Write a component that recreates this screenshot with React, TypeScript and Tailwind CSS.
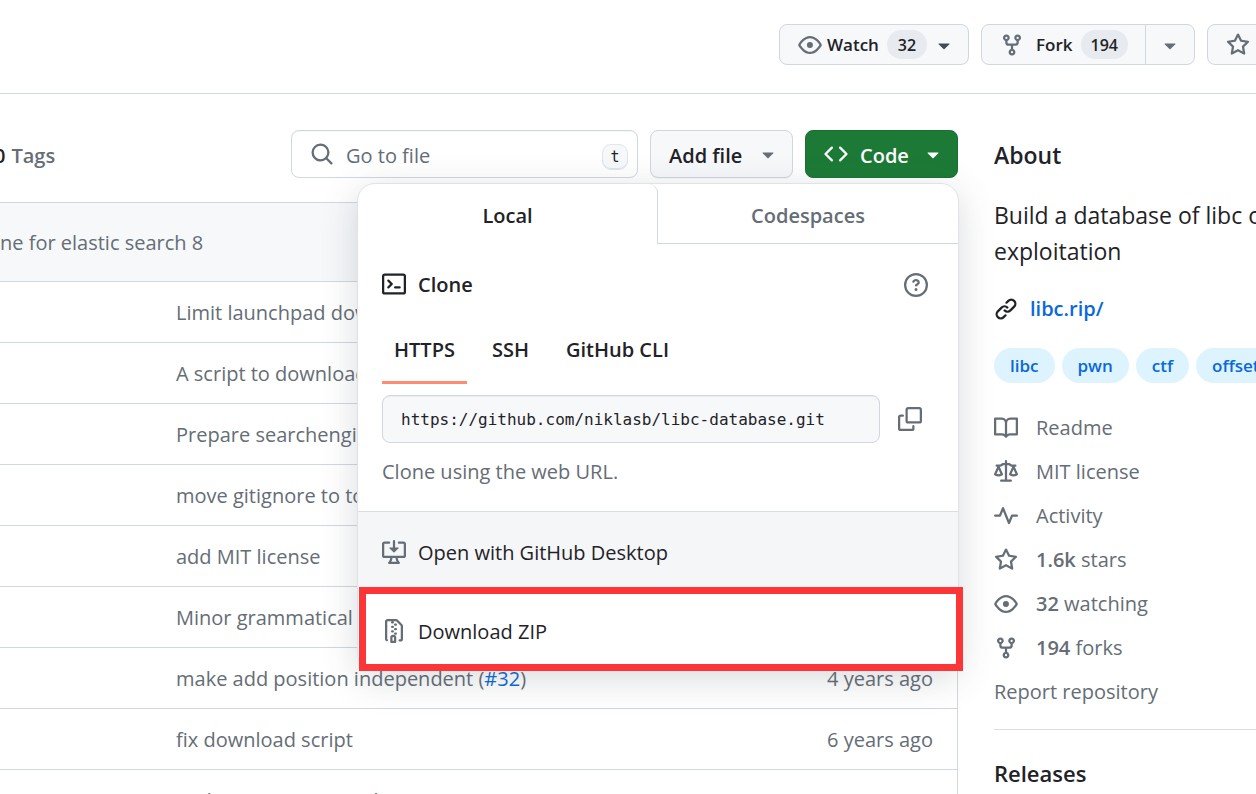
import type { ReactNode } from "react";

const icons = {
  eye: "M8 2c1.981 0 3.671.992 4.933 2.078 1.27 1.091 2.187 2.345 2.637 3.023a1.62 1.62 0 0 1 0 1.798c-.45.678-1.367 1.932-2.637 3.023C11.67 13.008 9.981 14 8 14c-1.981 0-3.671-.992-4.933-2.078C1.797 10.83.88 9.576.43 8.898a1.62 1.62 0 0 1 0-1.798c.45-.677 1.367-1.931 2.637-3.022C4.33 2.992 6.019 2 8 2ZM1.679 7.932a.12.12 0 0 0 0 .136c.411.622 1.241 1.75 2.366 2.717C5.176 11.758 6.527 12.5 8 12.5c1.473 0 2.825-.742 3.955-1.715 1.124-.967 1.954-2.096 2.366-2.717a.12.12 0 0 0 0-.136c-.412-.621-1.242-1.75-2.366-2.717C10.824 4.242 9.473 3.5 8 3.5c-1.473 0-2.825.742-3.955 1.715-1.124.967-1.954 2.096-2.366 2.717ZM8 10a2 2 0 1 1-.001-3.999A2 2 0 0 1 8 10Z",
  fork: "M5 5.372v.878c0 .414.336.75.75.75h4.5a.75.75 0 0 0 .75-.75v-.878a2.25 2.25 0 1 1 1.5 0v.878a2.25 2.25 0 0 1-2.25 2.25h-1.5v2.128a2.251 2.251 0 1 1-1.5 0V8.5h-1.5A2.25 2.25 0 0 1 3.5 6.25v-.878a2.25 2.25 0 1 1 1.5 0ZM5 3.25a.75.75 0 1 0-1.5 0 .75.75 0 0 0 1.5 0Zm6.75.75a.75.75 0 1 0 0-1.5.75.75 0 0 0 0 1.5Zm-3 8.75a.75.75 0 1 0-1.5 0 .75.75 0 0 0 1.5 0Z",
  caret: "m4.427 7.427 3.396 3.396a.25.25 0 0 0 .354 0l3.396-3.396A.25.25 0 0 0 11.396 7H4.604a.25.25 0 0 0-.177.427Z",
  star: "M8 .25a.75.75 0 0 1 .673.418l1.882 3.815 4.21.612a.75.75 0 0 1 .416 1.279l-3.046 2.97.719 4.192a.751.751 0 0 1-1.088.791L8 12.347l-3.766 1.98a.75.75 0 0 1-1.088-.79l.72-4.194L.818 6.374a.75.75 0 0 1 .416-1.28l4.21-.611L7.327.668A.75.75 0 0 1 8 .25Zm0 2.445L6.615 5.5a.75.75 0 0 1-.564.41l-3.097.45 2.24 2.184a.75.75 0 0 1 .216.664l-.528 3.084 2.769-1.456a.75.75 0 0 1 .698 0l2.77 1.456-.53-3.084a.75.75 0 0 1 .216-.664l2.24-2.183-3.096-.45a.75.75 0 0 1-.564-.41L8 2.694Z",
  search: "M10.68 11.74a6 6 0 0 1-7.922-8.982 6 6 0 0 1 8.982 7.922l3.04 3.04a.749.749 0 0 1-.326 1.275.749.749 0 0 1-.734-.215ZM11.5 7a4.499 4.499 0 1 0-8.997 0A4.499 4.499 0 0 0 11.5 7Z",
  code: "m11.28 3.22 4.25 4.25a.75.75 0 0 1 0 1.06l-4.25 4.25a.749.749 0 0 1-1.275-.326.749.749 0 0 1 .215-.734L13.94 8l-3.72-3.72a.749.749 0 0 1 .326-1.275.749.749 0 0 1 .734.215Zm-6.56 0a.751.751 0 0 1 1.042.018.751.751 0 0 1 .018 1.042L2.06 8l3.72 3.72a.749.749 0 0 1-.326 1.275.749.749 0 0 1-.734-.215L.47 8.53a.75.75 0 0 1 0-1.06Z",
  terminal: "M0 2.75C0 1.784.784 1 1.75 1h12.5c.966 0 1.75.784 1.75 1.75v10.5A1.75 1.75 0 0 1 14.25 15H1.75A1.75 1.75 0 0 1 0 13.25Zm1.75-.25a.25.25 0 0 0-.25.25v10.5c0 .138.112.25.25.25h12.5a.25.25 0 0 0 .25-.25V2.75a.25.25 0 0 0-.25-.25ZM7.25 8a.749.749 0 0 1-.22.53l-2.25 2.25a.749.749 0 0 1-1.275-.326.749.749 0 0 1 .215-.734L5.44 8 3.72 6.28a.749.749 0 0 1 .326-1.275.749.749 0 0 1 .734.215l2.25 2.25c.141.14.22.331.22.53Zm1.5 1.5h3a.75.75 0 0 1 0 1.5h-3a.75.75 0 0 1 0-1.5Z",
  question: "M0 8a8 8 0 1 1 16 0A8 8 0 0 1 0 8Zm8-6.5a6.5 6.5 0 1 0 0 13 6.5 6.5 0 0 0 0-13ZM6.92 6.085h.001a.749.749 0 1 1-1.342-.67c.169-.339.436-.701.849-.977C6.845 4.16 7.369 4 8 4a2.756 2.756 0 0 1 1.637.525c.503.377.863.965.863 1.725 0 .448-.115.83-.329 1.15-.205.307-.47.513-.692.662-.109.072-.22.138-.313.195l-.006.004a6.24 6.24 0 0 0-.26.16.952.952 0 0 0-.276.245.75.75 0 0 1-1.248-.832c.184-.264.42-.489.692-.661.103-.067.207-.132.313-.195l.007-.004c.1-.061.182-.11.258-.161a.969.969 0 0 0 .277-.245C8.96 6.514 9 6.427 9 6.25a.612.612 0 0 0-.262-.525A1.27 1.27 0 0 0 8 5.5c-.369 0-.595.09-.74.187a1.01 1.01 0 0 0-.34.398ZM9 11a1 1 0 1 1-2 0 1 1 0 0 1 2 0Z",
  copy: "M0 6.75C0 5.784.784 5 1.75 5h1.5a.75.75 0 0 1 0 1.5h-1.5a.25.25 0 0 0-.25.25v7.5c0 .138.112.25.25.25h7.5a.25.25 0 0 0 .25-.25v-1.5a.75.75 0 0 1 1.5 0v1.5A1.75 1.75 0 0 1 9.25 16h-7.5A1.75 1.75 0 0 1 0 14.25ZM5 1.75C5 .784 5.784 0 6.75 0h7.5C15.216 0 16 .784 16 1.75v7.5A1.75 1.75 0 0 1 14.25 11h-7.5A1.75 1.75 0 0 1 5 9.25Zm1.75-.25a.25.25 0 0 0-.25.25v7.5c0 .138.112.25.25.25h7.5a.25.25 0 0 0 .25-.25v-7.5a.25.25 0 0 0-.25-.25Z",
  desktop: "m4.927 5.427 2.896 2.896a.25.25 0 0 0 .354 0l2.896-2.896A.25.25 0 0 0 10.896 5H8.75V.75a.75.75 0 1 0-1.5 0V5H5.104a.25.25 0 0 0-.177.427ZM1.573 2.573a.25.25 0 0 0-.073.177v7.5a.25.25 0 0 0 .25.25h12.5a.25.25 0 0 0 .25-.25v-7.5a.25.25 0 0 0-.25-.25h-3a.75.75 0 1 1 0-1.5h3A1.75 1.75 0 0 1 16 2.75v7.5A1.75 1.75 0 0 1 14.25 12h-3.727c.099 1.041.52 1.872 1.292 2.757A.75.75 0 0 1 11.25 16h-6.5a.75.75 0 0 1-.565-1.243c.772-.885 1.192-1.716 1.292-2.757H1.75A1.75 1.75 0 0 1 0 10.25v-7.5A1.75 1.75 0 0 1 1.75 1h3a.75.75 0 0 1 0 1.5h-3a.25.25 0 0 0-.177.073ZM6.982 12a5.72 5.72 0 0 1-.765 2.5h3.566a5.72 5.72 0 0 1-.765-2.5H6.982Z",
  zip: "M3.5 1.75v11.5c0 .09.048.173.126.217a.75.75 0 0 1-.752 1.298A1.748 1.748 0 0 1 2 13.25V1.75C2 .784 2.784 0 3.75 0h5.586c.464 0 .909.185 1.237.513l2.914 2.914c.329.328.513.773.513 1.237v8.586A1.75 1.75 0 0 1 12.25 15h-.5a.75.75 0 0 1 0-1.5h.5a.25.25 0 0 0 .25-.25V4.664a.25.25 0 0 0-.073-.177L9.513 1.573a.25.25 0 0 0-.177-.073H7.25a.75.75 0 0 1 0 1.5h-.5a.75.75 0 0 1 0-1.5h-3a.25.25 0 0 0-.25.25Zm3.75 8.75h.5c.966 0 1.75.784 1.75 1.75v3a.75.75 0 0 1-.75.75h-2.5a.75.75 0 0 1-.75-.75v-3c0-.966.784-1.75 1.75-1.75ZM6 5.25a.75.75 0 0 1 .75-.75h.5a.75.75 0 0 1 0 1.5h-.5A.75.75 0 0 1 6 5.25Zm.75 2.25h.5a.75.75 0 0 1 0 1.5h-.5a.75.75 0 0 1 0-1.5ZM8 6.75A.75.75 0 0 1 8.75 6h.5a.75.75 0 0 1 0 1.5h-.5A.75.75 0 0 1 8 6.75ZM8.75 3h.5a.75.75 0 0 1 0 1.5h-.5a.75.75 0 0 1 0-1.5ZM8 9.75A.75.75 0 0 1 8.75 9h.5a.75.75 0 0 1 0 1.5h-.5A.75.75 0 0 1 8 9.75Zm-1 2.5v2.25h1v-2.25a.25.25 0 0 0-.25-.25h-.5a.25.25 0 0 0-.25.25Z",
  link: "m7.775 3.275 1.25-1.25a3.5 3.5 0 1 1 4.95 4.95l-2.5 2.5a3.5 3.5 0 0 1-4.95 0 .751.751 0 0 1 .018-1.042.751.751 0 0 1 1.042-.018 1.998 1.998 0 0 0 2.83 0l2.5-2.5a2.002 2.002 0 0 0-2.83-2.83l-1.25 1.25a.751.751 0 0 1-1.042-.018.751.751 0 0 1-.018-1.042Zm-4.69 9.64a1.998 1.998 0 0 0 2.83 0l1.25-1.25a.751.751 0 0 1 1.042.018.751.751 0 0 1 .018 1.042l-1.25 1.25a3.5 3.5 0 1 1-4.95-4.95l2.5-2.5a3.5 3.5 0 0 1 4.95 0 .751.751 0 0 1-.018 1.042.751.751 0 0 1-1.042.018 1.998 1.998 0 0 0-2.83 0l-2.5 2.5a1.998 1.998 0 0 0 0 2.83Z",
  book: "M0 1.75A.75.75 0 0 1 .75 1h4.253c1.227 0 2.317.59 3 1.501A3.743 3.743 0 0 1 11.006 1h4.245a.75.75 0 0 1 .75.75v10.5a.75.75 0 0 1-.75.75h-4.507a2.25 2.25 0 0 0-1.591.659l-.622.621a.75.75 0 0 1-1.06 0l-.622-.621A2.25 2.25 0 0 0 5.258 13H.75a.75.75 0 0 1-.75-.75Zm7.251 10.324.004-5.073-.002-2.253A2.25 2.25 0 0 0 5.003 2.5H1.5v9h3.757a3.75 3.75 0 0 1 1.994.574ZM8.755 4.75l-.004 7.322a3.752 3.752 0 0 1 1.992-.572H14.5v-9h-3.495a2.25 2.25 0 0 0-2.25 2.25Z",
  law: "M8.75.75V2h.985c.304 0 .603.08.867.231l1.29.736c.038.022.08.033.124.033h2.234a.75.75 0 0 1 0 1.5h-.427l2.111 4.692a.75.75 0 0 1-.154.838l-.53-.53.529.531-.001.002-.002.002-.006.006-.006.005-.01.01-.045.04c-.21.176-.441.327-.686.45C14.556 10.78 13.88 11 13 11a4.498 4.498 0 0 1-2.023-.454 3.544 3.544 0 0 1-.686-.45l-.045-.04-.016-.015-.006-.006-.004-.004v-.001a.75.75 0 0 1-.154-.838L12.178 4.5h-.162c-.305 0-.604-.079-.868-.231l-1.29-.736a.245.245 0 0 0-.124-.033H8.75V13h2.5a.75.75 0 0 1 0 1.5h-6.5a.75.75 0 0 1 0-1.5h2.5V3.5h-.984a.245.245 0 0 0-.124.033l-1.289.737c-.265.15-.564.23-.869.23h-.162l2.112 4.692a.75.75 0 0 1-.154.838l-.53-.53.529.531-.001.002-.002.002-.006.006-.016.015-.045.04c-.21.176-.441.327-.686.45C4.556 10.78 3.88 11 3 11a4.498 4.498 0 0 1-2.023-.454 3.544 3.544 0 0 1-.686-.45l-.045-.04-.016-.015-.006-.006-.004-.004v-.001a.75.75 0 0 1-.154-.838L2.178 4.5H1.75a.75.75 0 0 1 0-1.5h2.234a.249.249 0 0 0 .125-.033l1.288-.737c.265-.15.564-.23.869-.23h.984V.75a.75.75 0 0 1 1.5 0Zm2.945 8.477c.285.135.718.273 1.305.273s1.02-.138 1.305-.273L13 6.327Zm-10 0c.285.135.718.273 1.305.273s1.02-.138 1.305-.273L3 6.327Z",
  pulse: "M6 2c.306 0 .582.187.696.471L10 10.731l1.304-3.26A.751.751 0 0 1 12 7h3.25a.75.75 0 0 1 0 1.5h-2.742l-1.812 4.528a.751.751 0 0 1-1.392 0L6 4.77 4.696 8.03A.75.75 0 0 1 4 8.5H.75a.75.75 0 0 1 0-1.5h2.742l1.812-4.529A.751.751 0 0 1 6 2Z",
};

type IconName = keyof typeof icons;

function Icon({ name, className = "" }: { name: IconName; className?: string }) {
  return (
    <svg viewBox="0 0 16 16" aria-hidden="true" className={`size-6 shrink-0 fill-current ${className}`}>
      <path d={icons[name]} />
    </svg>
  );
}

function Counter({ children }: { children: ReactNode }) {
  return (
    <span className="flex h-[29px] min-w-10 items-center justify-center rounded-full bg-[#e7eaef] px-2.5 text-[16px]">
      {children}
    </span>
  );
}

const smallButton = "flex h-[41px] items-center border border-[#d0d7de] bg-[#f6f8fa] text-[17px] font-semibold";

function RepoHeader() {
  return (
    <header className="flex h-[94px] items-start overflow-hidden border-b border-[#d0d7de] pt-6">
      <div className="flex-1" />
      <div className="flex w-[477px] shrink-0 gap-3">
        <button type="button" className={`${smallButton} w-[190px] shrink-0 rounded-lg pl-[18px]`}>
          <Icon name="eye" className="mr-[5px] text-[#656d76]" />
          <span className="mr-2 pt-px">Watch</span>
          <Counter>32</Counter>
          <Icon name="caret" className="ml-[5px] text-[#424a53]" />
        </button>
        <div className="flex w-[214px] shrink-0">
          <button type="button" className={`${smallButton} flex-1 rounded-l-lg pl-[18px]`}>
            <Icon name="fork" className="mr-3 text-[#656d76]" />
            <span className="mr-2 pt-px">Fork</span>
            <Counter>194</Counter>
          </button>
          <button
            type="button"
            aria-label="See your forks"
            className={`${smallButton} -ml-px w-[50px] justify-center rounded-r-lg text-[#656d76]`}
          >
            <Icon name="caret" />
          </button>
        </div>
        <button
          type="button"
          aria-label="Star this repository"
          className={`${smallButton} w-40 shrink-0 rounded-lg pl-[18px] text-[#656d76]`}
        >
          <Icon name="star" />
        </button>
      </div>
    </header>
  );
}

function ClonePopover() {
  return (
    <div
      role="dialog"
      aria-label="Get the code"
      className="absolute top-[53px] -right-px z-10 w-[602px] rounded-[18px] border border-[#dfe3e8] bg-white shadow-[0_8px_36px_rgba(66,74,83,0.2)]"
    >
      <div role="tablist" className="flex h-[60px]">
        <button
          type="button"
          role="tab"
          aria-selected="true"
          className="w-[300px] rounded-tr-[9px] border-r border-[#d0d7de] pt-1 font-semibold"
        >
          Local
        </button>
        <button
          type="button"
          role="tab"
          aria-selected="false"
          className="flex-1 border-b border-[#d0d7de] pt-1 font-semibold text-[#656d76]"
        >
          Codespaces
        </button>
      </div>

      <section className="px-6 pt-6 pb-6">
        <div className="flex h-8 items-center">
          <Icon name="terminal" className="mr-3" />
          <h2 className="pt-0.5 font-semibold">Clone</h2>
          <button
            type="button"
            aria-label="Which remote URL should I use?"
            className="mr-1.5 ml-auto pt-0.5 text-[#656d76]"
          >
            <Icon name="question" />
          </button>
        </div>
        <nav className="mt-4 flex h-[68px] gap-[13px] font-semibold">
          <button type="button" className="border-b-[3px] border-[#fd8c73] px-3 pt-0.5">HTTPS</button>
          <button type="button" className="border-b-[3px] border-transparent px-3 pt-0.5">SSH</button>
          <button type="button" className="border-b-[3px] border-transparent px-3 pt-0.5">GitHub CLI</button>
        </nav>
        <div className="mt-[11px] flex items-center">
          <input
            readOnly
            aria-label="Clone URL"
            value="https://github.com/niklasb/libc-database.git"
            className="h-12 min-w-0 flex-1 rounded-lg border border-[#d0d7de] bg-[#f6f8fa] px-[18px] font-['DejaVu_Sans_Mono',monospace] text-[16px] text-[#1f2328] shadow-[inset_0_1px_0_rgba(208,215,222,0.3)]"
          />
          <button type="button" aria-label="Copy URL" className="ml-1.5 p-3 text-[#656d76]">
            <Icon name="copy" />
          </button>
        </div>
        <p className="mt-3.5 leading-[30px] text-[#656d76]">Clone using the web URL.</p>
      </section>

      <ul>
        <li className="border-t border-[#d8dee4]">
          <a href="#desktop" className="flex h-20 items-center gap-3 bg-[#f5f6f8] px-6">
            <Icon name="desktop" className="text-[#656d76]" />
            <span className="pt-0.5">Open with GitHub Desktop</span>
          </a>
        </li>
        <li className="relative">
          <a href="#zip" className="flex h-[78px] items-center gap-3 px-6">
            <Icon name="zip" className="text-[#656d76]" />
            <span className="pt-0.5">Download ZIP</span>
          </a>
          <div className="pointer-events-none absolute -top-[5px] -right-[5px] -bottom-px left-px border-[7px] border-[#fc3636]" />
        </li>
      </ul>
    </div>
  );
}

function Toolbar() {
  return (
    <div className="flex h-12 items-center gap-3">
      <a href="#tags" className="-ml-1.5 flex gap-1.5 pt-[3px] font-semibold text-[#656d76]">
        <span className="text-[#1f2328]">0</span> Tags
      </a>
      <label className="ml-auto flex h-12 w-[347px] items-center rounded-lg border border-[#d0d7de] pr-[9px] pl-[18px] shadow-[inset_0_1px_0_rgba(208,215,222,0.2)]">
        <Icon name="search" className="mr-3 text-[#656d76]" />
        <input
          type="text"
          aria-label="Go to file"
          placeholder="Go to file"
          className="min-w-0 flex-1 pt-[3px] outline-none placeholder:text-[#656d76]"
        />
        <kbd className="mt-1.5 flex size-[26px] items-center justify-center rounded-[9px] border border-[#e2e6eb] bg-[#f6f8fa] font-['DejaVu_Sans_Mono',monospace] text-[15px] shadow-[inset_0_-1px_0_#dfe4ea]">
          t
        </kbd>
      </label>
      <button
        type="button"
        className="flex h-12 w-[143px] items-center justify-between rounded-lg border border-[#d0d7de] bg-[#f6f8fa] pr-3 pl-[18px] font-semibold shadow-[0_1px_0_rgba(31,35,40,0.04)]"
      >
        <span className="pt-[3px]">Add file</span>
        <Icon name="caret" className="text-[#656d76]" />
      </button>
      <div className="relative">
        <button
          type="button"
          className="flex h-12 w-[153px] items-center rounded-lg border border-[#1a7132] bg-[#1c7a36] px-[18px] font-semibold text-white"
        >
          <Icon name="code" className="mr-3" />
          <span className="pt-[3px]">Code</span>
          <Icon name="caret" className="-mr-1.5 ml-auto" />
        </button>
        <ClonePopover />
      </div>
    </div>
  );
}

type Commit = { message: string; issue?: string; age: string };

const commits: Commit[] = [
  { message: "Limit launchpad downloads", age: "2 years ago" },
  { message: "A script to download all", age: "4 years ago" },
  { message: "Prepare searchengine for elastic search 8", age: "last year" },
  { message: "move gitignore to toplevel", age: "4 years ago" },
  { message: "add MIT license", age: "6 years ago" },
  { message: "Minor grammatical fixes", age: "4 years ago" },
  { message: "make add position independent", issue: "#32", age: "4 years ago" },
  { message: "fix download script", age: "6 years ago" },
  { message: "Redux Resource me de", issue: "#37", age: "4 years ago" },
];

function FileTable() {
  return (
    <table className="mt-6 w-full table-fixed border-separate border-spacing-0 border-t border-r border-[#d0d7de] text-[#656d76]">
      <colgroup>
        <col className="w-44" />
        <col />
        <col className="w-[200px]" />
      </colgroup>
      <thead>
        <tr>
          <th colSpan={3} className="h-[79px] border-b border-[#d0d7de] bg-[#f6f8fa] pt-0.5 text-left font-normal">
            ne for elastic search 8
          </th>
        </tr>
      </thead>
      <tbody>
        {commits.map((commit) => (
          <tr key={commit.message}>
            <td className="h-[61px] border-b border-[#d0d7de]" />
            <td className="border-b border-[#d0d7de] pt-0.5 whitespace-nowrap">
              {commit.message}
              {commit.issue && (
                <>
                  {" "}(
                  <a href="#issue" className="text-[#0969da]">{commit.issue}</a>)
                </>
              )}
            </td>
            <td className="border-b border-[#d0d7de] pt-0.5 pr-6 text-right">{commit.age}</td>
          </tr>
        ))}
      </tbody>
    </table>
  );
}

const topics = ["libc", "pwn", "ctf", "offset"];

const facts: { icon: IconName; count?: string; label: string }[] = [
  { icon: "book", label: "Readme" },
  { icon: "law", label: "MIT license" },
  { icon: "pulse", label: "Activity" },
  { icon: "star", count: "1.6k", label: "stars" },
  { icon: "eye", count: "32", label: "watching" },
  { icon: "fork", count: "194", label: "forks" },
];

function Sidebar() {
  return (
    <aside className="w-[262px] shrink-0 overflow-hidden pt-[7px]">
      <h2 className="text-[23px] leading-9 font-semibold">About</h2>
      <p className="mt-6 text-[23px] leading-9 whitespace-nowrap">
        Build a database of libc offsets
        <br />
        exploitation
      </p>
      <div className="mt-6 flex h-8 items-center gap-3">
        <Icon name="link" />
        <a href="#site" className="font-semibold text-[#0969da]">libc.rip/</a>
      </div>
      <div className="mt-[23px] flex gap-[7px]">
        {topics.map((topic) => (
          <a
            key={topic}
            href="#topic"
            className="flex h-[35px] shrink-0 items-center rounded-full bg-[#ddf4ff] px-4 text-[17px] font-semibold text-[#0969da]"
          >
            {topic}
          </a>
        ))}
      </div>
      <ul className="mt-[31px] flex flex-col gap-4 leading-7 text-[#656d76]">
        {facts.map((fact) => (
          <li key={fact.label}>
            <a href="#fact" className="flex items-center gap-[18px]">
              <Icon name={fact.icon} />
              <span>
                {fact.count && <strong className="font-semibold">{fact.count} </strong>}
                {fact.label}
              </span>
            </a>
          </li>
        ))}
        <li>
          <a href="#report">Report repository</a>
        </li>
      </ul>
      <hr className="mt-[23px] border-[#d8dee4]" />
      <h2 className="mt-[25px] text-[22px] leading-9 font-semibold">Releases</h2>
    </aside>
  );
}

export default function App() {
  return (
    <div className="h-screen overflow-hidden bg-white font-['Open_Sans','Noto_Sans',sans-serif] text-[20px] leading-[30px] text-[#1f2328]">
      <RepoHeader />
      <main className="flex gap-9 pt-9">
        <div className="min-w-0 flex-1">
          <Toolbar />
          <FileTable />
        </div>
        <Sidebar />
      </main>
    </div>
  );
}
